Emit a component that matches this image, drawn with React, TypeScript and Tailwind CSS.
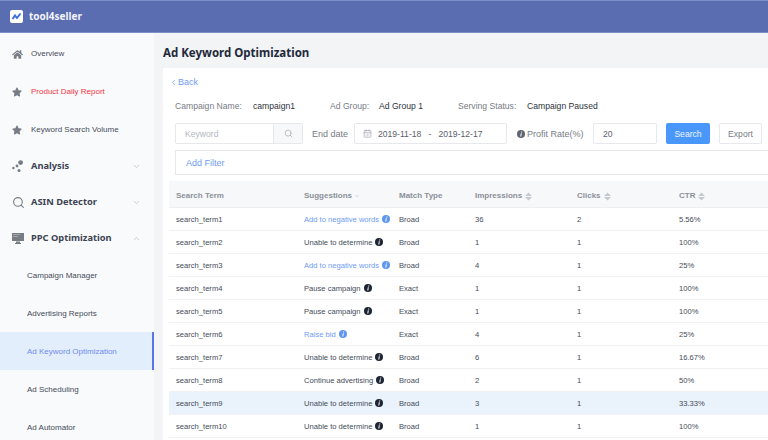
import { ChevronDown, ChevronLeft, ChevronUp, Search, CalendarDays } from "lucide-react";
import { FaHome, FaStar } from "react-icons/fa";

const rows = [
  { term: "search_term1", tip: "Add to negative words", blue: true, match: "Broad", imp: "36", clicks: "2", ctr: "5.56%" },
  { term: "search_term2", tip: "Unable to determine", match: "Broad", imp: "1", clicks: "1", ctr: "100%" },
  { term: "search_term3", tip: "Add to negative words", blue: true, match: "Broad", imp: "4", clicks: "1", ctr: "25%" },
  { term: "search_term4", tip: "Pause campaign", match: "Exact", imp: "1", clicks: "1", ctr: "100%" },
  { term: "search_term5", tip: "Pause campaign", match: "Exact", imp: "1", clicks: "1", ctr: "100%" },
  { term: "search_term6", tip: "Raise bid", blue: true, match: "Exact", imp: "4", clicks: "1", ctr: "25%" },
  { term: "search_term7", tip: "Unable to determine", match: "Broad", imp: "6", clicks: "1", ctr: "16.67%" },
  { term: "search_term8", tip: "Continue advertising", match: "Broad", imp: "2", clicks: "1", ctr: "50%" },
  { term: "search_term9", tip: "Unable to determine", match: "Broad", imp: "3", clicks: "1", ctr: "33.33%", hover: true },
  { term: "search_term10", tip: "Unable to determine", match: "Broad", imp: "1", clicks: "1", ctr: "100%" },
];

// round "i" badge used next to suggestions and the profit rate label
function Info({ color }: { color: string }) {
  return (
    <svg width="8" height="8" viewBox="0 0 16 16" className="shrink-0">
      <circle cx="8" cy="8" r="8" fill={color} />
      <path d="M8.6 3h2l-.4 2h-2zM7.6 6.6h2L8.6 13h-2z" fill="#fff" />
    </svg>
  );
}

function SortIcon() {
  return (
    <svg width="7" height="9" viewBox="0 0 7 9" className="shrink-0">
      <path d="M3.5 0.5 7 4H0zM0 5h7L3.5 8.5z" fill="#c4c8cf" />
    </svg>
  );
}

function Logo() {
  return (
    <svg width="13" height="13" viewBox="0 0 13 13">
      <rect width="13" height="13" rx="2" fill="#fff" />
      <path d="M2.5 9 5 5.5l2 2.5L10.5 3.5" fill="none" stroke="#3f6fe0" strokeWidth="2" />
    </svg>
  );
}

function AnalysisIcon() {
  return (
    <svg width="12" height="12" viewBox="0 0 12 12" fill="#777c85">
      <circle cx="8.6" cy="2.6" r="2.4" />
      <circle cx="1.4" cy="8" r="1.2" />
      <circle cx="5" cy="6" r="1.4" />
      <circle cx="7" cy="10.4" r="1.5" />
    </svg>
  );
}

function MonitorIcon() {
  return (
    <svg width="12" height="11" viewBox="0 0 12 11" fill="#777c85">
      <path d="M0 0h12v8H0z" />
      <path d="M1 1h7v1H1zM1 3h5v1H1z" fill="#a4a8ae" />
      <path d="M4 8.5h4V10h1v1H3v-1h1z" />
    </svg>
  );
}

function NavItem({ icon, label, className }: { icon: React.ReactNode; label: string; className: string }) {
  return (
    <div className="flex h-[38px] items-center pl-3 pt-[2px] text-[8px]">
      <span className="flex w-[19px] shrink-0 items-center">{icon}</span>
      <span className={className}>{label}</span>
    </div>
  );
}

function NavGroup({ icon, label, open }: { icon: React.ReactNode; label: string; open?: boolean }) {
  return (
    <div className="flex h-[36px] items-center pl-3 pr-[13px]">
      <span className="flex w-[19px] shrink-0 items-center">{icon}</span>
      <span className="flex-1 font-['Noto_Sans',sans-serif] text-[9.3px] font-bold text-[#3d4352]">{label}</span>
      {open ? <ChevronUp size={9} color="#b9bdc4" /> : <ChevronDown size={9} color="#b9bdc4" />}
    </div>
  );
}

function SubItem({ label, active }: { label: string; active?: boolean }) {
  return (
    <div
      className={
        active
          ? "flex h-[38px] items-center border-r-2 border-[#5b74e8] bg-[#e2eefb] pl-[27px] pt-[2px] text-[8px] text-[#6f8af0]"
          : "flex h-[38px] items-center pl-[27px] pt-[2px] text-[8px] text-[#454b59]"
      }
    >
      {label}
    </div>
  );
}

export default function App() {
  return (
    <div className="flex h-[440px] w-[768px] flex-col overflow-hidden bg-[#f3f4f6] font-['Liberation_Sans',sans-serif] text-[8.6px] text-[#454b59]">
      <header className="flex h-[33px] shrink-0 items-center gap-[6px] border-y border-y-[#7d8fc6] bg-[#5a6db0] pl-[10px]">
        <Logo />
        <span className="font-['Noto_Sans',sans-serif] text-[10px] font-bold text-[#f2f4fa]">tool4seller</span>
      </header>

      <div className="flex min-h-0 flex-1">
        <aside className="w-[154px] shrink-0 bg-[#f9fafc] pt-[1px]">
          <NavItem icon={<FaHome size={11} color="#777c85" />} label="Overview" className="text-[#454b59]" />
          <NavItem icon={<FaStar size={10} color="#777c85" />} label="Product Daily Report" className="text-[#f5343f]" />
          <NavItem icon={<FaStar size={10} color="#777c85" />} label="Keyword Search Volume" className="text-[#454b59]" />
          <NavGroup icon={<AnalysisIcon />} label="Analysis" />
          <NavGroup icon={<Search size={13} color="#777c85" />} label="ASIN Detector" />
          <NavGroup icon={<MonitorIcon />} label="PPC Optimization" open />
          <SubItem label="Campaign Manager" />
          <SubItem label="Advertising Reports" />
          <SubItem label="Ad Keyword Optimization" active />
          <SubItem label="Ad Scheduling" />
          <SubItem label="Ad Automator" />
        </aside>

        <main className="min-w-0 flex-1 pl-[9px]">
          <h1 className="flex h-[35px] items-center pt-[4px] font-['Noto_Sans',sans-serif] text-[11.5px] font-bold text-[#22293a]">
            Ad Keyword Optimization
          </h1>

          <section className="h-full w-[640px] bg-white pl-[6px]">
            <div className="flex h-[26px] items-center pt-[3px] text-[9px] text-[#6f9cf5]">
              <ChevronLeft size={9} />
              <span>Back</span>
            </div>

            <div className="flex h-[22px] items-center whitespace-nowrap pl-[6px] pt-[2px]">
              <span className="w-[78px] text-[#777c85]">Campaign Name:</span>
              <span className="w-[77px] text-[#2d3340]">campaign1</span>
              <span className="w-[49px] text-[#777c85]">Ad Group:</span>
              <span className="w-[79px] text-[#2d3340]">Ad Group 1</span>
              <span className="w-[69px] text-[#777c85]">Serving Status:</span>
              <span className="text-[#2d3340]">Campaign Paused</span>
            </div>

            <div className="mt-[7px] flex h-[21px] items-center whitespace-nowrap pl-[6px]">
              <div className="flex h-[21px] w-[128px] rounded-[2px] border border-[#e6e8ec]">
                <span className="flex flex-1 items-center pl-[9px] pt-[2px] text-[#b4b8bf]">Keyword</span>
                <span className="flex w-[29px] items-center justify-center border-l border-[#e6e8ec] bg-[#f7f8fa]">
                  <Search size={9} color="#a9adb5" />
                </span>
              </div>
              <span className="ml-[9px] w-[42px] pt-[2px] text-[9px] text-[#777c85]">End date</span>
              <div className="flex h-[21px] w-[153px] items-center rounded-[2px] border border-[#e6e8ec] pl-[8px] text-[#5a606c]">
                <CalendarDays size={9} color="#a9adb5" />
                <span className="ml-[3px] whitespace-pre pl-[3px] pt-[2px]">2019-11-18   -   2019-12-17</span>
              </div>
              <span className="ml-[10px] flex w-[76px] items-center gap-[2px] text-[9px] text-[#777c85]">
                <Info color="#5f6570" />
                <span className="pt-[2px]">Profit Rate(%)</span>
              </span>
              <div className="flex h-[21px] w-[64px] items-center rounded-[2px] border border-[#e6e8ec] pl-[9px] pt-[2px] text-[#5a606c]">20</div>
              <button className="ml-[9px] h-[21px] w-[44px] rounded-[2px] bg-[#4a97fb] pt-[1px] text-center text-[#eef5ff]">Search</button>
              <button className="ml-[9px] h-[21px] w-[43px] rounded-[2px] border border-[#e6e8ec] pt-[1px] text-center text-[#777c85]">Export</button>
            </div>

            <div className="mt-[6px] ml-[6px] flex h-[25px] items-center border-y border-l border-[#e6e8ec] pl-[10px] pt-[3px] text-[9px] text-[#6f9cf5]">
              Add Filter
            </div>

            <div className="mt-[6px] w-[640px] whitespace-nowrap text-[7.6px]">
              <div className="flex h-[27px] items-center border-b border-[#edeff2] bg-[#f7f8fa] pl-[7px] pt-[4px] text-[8px] font-bold text-[#8b9099]">
                <span className="w-[128px]">Search Term</span>
                <span className="flex w-[95px] items-center gap-[2px]">
                  Suggestions
                  <ChevronDown size={6} color="#b0b4bb" />
                </span>
                <span className="w-[76px]">Match Type</span>
                <span className="flex w-[102px] items-center gap-[3px]">Impressions <SortIcon /></span>
                <span className="flex w-[102px] items-center gap-[3px]">Clicks <SortIcon /></span>
                <span className="flex items-center gap-[3px]">CTR <SortIcon /></span>
              </div>
              {rows.map((r) => (
                <div
                  key={r.term}
                  className={
                    r.hover
                      ? "flex h-[23px] items-center border-b border-[#f0f1f4] bg-[#eaf2fc] pl-[7px] pt-[1px]"
                      : "flex h-[23px] items-center border-b border-[#f0f1f4] pl-[7px] pt-[1px]"
                  }
                >
                  <span className="w-[128px]">{r.term}</span>
                  <span className={r.blue ? "flex w-[95px] items-center gap-[3px] text-[#6f9cf5]" : "flex w-[95px] items-center gap-[3px]"}>
                    {r.tip}
                    <Info color={r.blue ? "#5f97f0" : "#1d2433"} />
                  </span>
                  <span className="w-[76px]">{r.match}</span>
                  <span className="w-[102px]">{r.imp}</span>
                  <span className="w-[102px]">{r.clicks}</span>
                  <span>{r.ctr}</span>
                </div>
              ))}
            </div>
          </section>
        </main>
      </div>
    </div>
  );
}
